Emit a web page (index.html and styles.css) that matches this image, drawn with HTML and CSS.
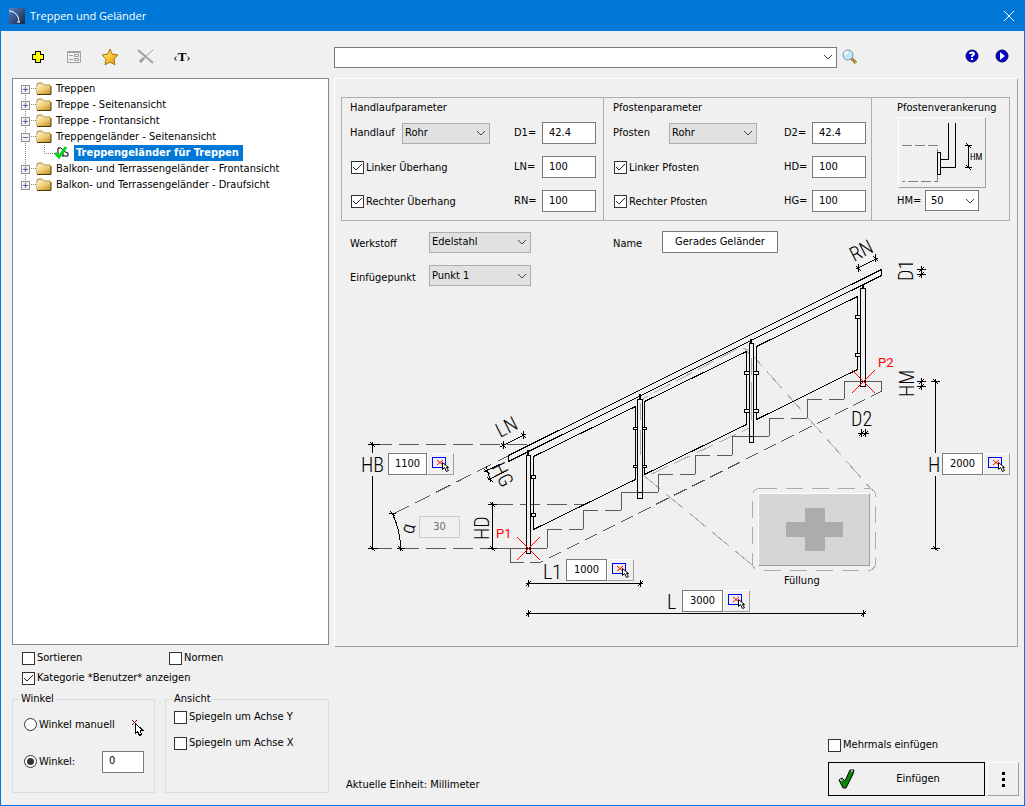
FILE: index.html
```html
<!DOCTYPE html>
<html lang="de">
<head>
    <meta charset="UTF-8">
    <meta name="viewport" content="width=device-width, initial-scale=1.0">
    <title>Treppen und Geländer</title>
    <link rel="stylesheet" href="styles.css">
</head>
<body>
    <!-- Shared icons -->
    <svg class="defs" width="0" height="0" aria-hidden="true">
        <defs>
            <linearGradient id="folderFill" x1="0" y1="0" x2="1" y2="1">
                <stop offset="0" stop-color="#fff3c0"/>
                <stop offset="0.5" stop-color="#ecc668"/>
                <stop offset="1" stop-color="#b98a24"/>
            </linearGradient>
            <linearGradient id="starFill" x1="0" y1="0" x2="1" y2="1">
                <stop offset="0" stop-color="#fff6a0"/>
                <stop offset="0.5" stop-color="#fbc832"/>
                <stop offset="1" stop-color="#e08a10"/>
            </linearGradient>
            <linearGradient id="appFill" x1="0" y1="0" x2="1" y2="1">
                <stop offset="0" stop-color="#5a7fc0"/>
                <stop offset="1" stop-color="#152548"/>
            </linearGradient>
            <symbol id="folder" viewBox="0 0 16 14">
                <path d="M1 12V2L2 1H6L8 3H14V12Z" fill="#f7e7ae" stroke="#a98a3c"/>
                <path d="M1 4H15V12H1Z" fill="url(#folderFill)"/>
                <path d="M15 4V12.500H1" fill="none" stroke="#4a3508"/>
            </symbol>
            <symbol id="pick" viewBox="0 0 20 18">
                <rect x="1.500" y="2.500" width="13" height="10" fill="none" stroke="#0000ff"/>
                <path d="M6 5L12 10M12 5L6 10" stroke="#ff0000"/>
                <path d="M11.500 7.500V14.500L13.500 12.500L15.500 16.500L17.500 15.500L15.500 12.500H17.500Z" fill="#fff" stroke="#000"/>
            </symbol>
        </defs>
    </svg>

    <header class="titlebar">
        <svg class="app-icon" width="16" height="16" viewBox="0 0 16 16">
            <rect width="16" height="16" fill="url(#appFill)"/>
            <path d="M0 3C5 3 10 7 10 14M8 14H11" fill="none" stroke="#fff"/>
        </svg>
        <h1>Treppen und Geländer</h1>
        <button class="close" type="button" aria-label="Schließen">
            <svg width="12" height="12" viewBox="0 0 12 12"><path d="M1 1L11 11M11 1L1 11" stroke="#fff" fill="none"/></svg>
        </button>
    </header>

    <main class="dialog">
        <div class="toolbar">
            <button class="tool" type="button" aria-label="Hinzufügen">
                <svg width="16" height="16" viewBox="0 0 16 16" shape-rendering="crispEdges"><path d="M5.500 2.500H10.500V5.500H13.500V10.500H10.500V13.500H5.500V10.500H2.500V5.500H5.500Z" fill="#ffff00" stroke="#000"/></svg>
            </button>
            <button class="tool" type="button" aria-label="Eigenschaften">
                <svg width="16" height="16" viewBox="0 0 16 16" fill="none" stroke="#a0a0a0">
                    <path d="M1.500 2.500H14.500V13.500H1.500ZM1 3.500H15"/>
                    <path d="M3 6.500H7M3 10.500H7M8.500 5.500H12.500V7.500H8.500ZM8.500 9.500H12.500V11.500H8.500Z"/>
                </svg>
            </button>
            <button class="tool" type="button" aria-label="Favorit">
                <svg width="16" height="16" viewBox="0 0 16 16"><path d="M8 0L10 5L16 6L12 10L13 16L8 13L3 16L4 10L0 6L6 5Z" fill="url(#starFill)" stroke="#a87414"/></svg>
            </button>
            <button class="tool" type="button" aria-label="Löschen">
                <svg width="18" height="16" viewBox="0 0 18 16" fill="none">
                    <path d="M3 2L17 15M17 2L5 14" stroke="#fff"/>
                    <path d="M1 1L16 14" stroke="#a0a0a0" stroke-width="2"/>
                    <path d="M16 1L6 10L3 14" stroke="#a0a0a0" stroke-width="1"/>
                    <path d="M7 9L3 13" stroke="#a0a0a0" stroke-width="3"/>
                </svg>
            </button>
            <button class="tool rename" type="button" aria-label="Umbenennen">&lsaquo;<b>T</b>&rsaquo;</button>
        </div>

        <div class="searchbar">
            <select class="search" aria-label="Suche"><option></option></select>
            <button class="tool" type="button" aria-label="Suchen">
                <svg width="16" height="16" viewBox="0 0 16 16">
                    <path d="M9 9L14 14" stroke="#8a6a20" stroke-width="3"/>
                    <path d="M9 9L14 14" stroke="#f0c860" stroke-width="1"/>
                    <circle cx="6" cy="6" r="5" fill="#c4e6f8" stroke="#7c96a8"/>
                    <path d="M3 6A3 3 0 0 1 6 3" stroke="#fff" stroke-width="2" fill="none"/>
                </svg>
            </button>
            <span class="spacer"></span>
            <button class="tool help" type="button" aria-label="Hilfe">
                <svg width="14" height="14" viewBox="0 0 14 14">
                    <circle cx="7" cy="7" r="6" fill="#0000c8" stroke="#000070"/>
                    <path d="M5 5C5 3 9 3 9 5C9 6 7 6 7 8M7 9V11" stroke="#fff" stroke-width="2" fill="none"/>
                </svg>
            </button>
            <button class="tool help" type="button" aria-label="Video">
                <svg width="14" height="14" viewBox="0 0 14 14">
                    <circle cx="7" cy="7" r="6" fill="#0000c8" stroke="#000070"/>
                    <path d="M5 3L10 7L5 11Z" fill="#fff"/>
                </svg>
            </button>
        </div>

        <ul class="tree">
            <li><button class="toggle" type="button" aria-label="Öffnen">+</button><a href="#"><svg class="folder"><use href="#folder"/></svg>Treppen</a></li>
            <li><button class="toggle" type="button" aria-label="Öffnen">+</button><a href="#"><svg class="folder"><use href="#folder"/></svg>Treppe - Seitenansicht</a></li>
            <li><button class="toggle" type="button" aria-label="Öffnen">+</button><a href="#"><svg class="folder"><use href="#folder"/></svg>Treppe - Frontansicht</a></li>
            <li><button class="toggle" type="button" aria-label="Schließen">−</button><a href="#"><svg class="folder"><use href="#folder"/></svg>Treppengeländer - Seitenansicht</a></li>
            <li class="child">
                <a href="#">
                    <svg width="16" height="16" viewBox="0 0 16 16">
                        <path d="M4 12V3H7L10 6M9 11V6L14 8V11H8" fill="none" stroke="#000" stroke-width="1"/>
                        <path d="M1 8L5 12L12 2" fill="none" stroke="#00d818" stroke-width="3"/>
                    </svg><span class="selected">Treppengeländer für Treppen</span>
                </a>
            </li>
            <li><button class="toggle" type="button" aria-label="Öffnen">+</button><a href="#"><svg class="folder"><use href="#folder"/></svg>Balkon- und Terrassengeländer - Frontansicht</a></li>
            <li><button class="toggle" type="button" aria-label="Öffnen">+</button><a href="#"><svg class="folder"><use href="#folder"/></svg>Balkon- und Terrassengeländer - Draufsicht</a></li>
        </ul>

        <section class="panel">
            <div class="params">
                <div class="group rail">
                    <h2>Handlaufparameter</h2>
                    <label for="handlauf">Handlauf</label>
                    <select id="handlauf"><option>Rohr</option></select>
                    <label class="value" for="d1">D1=</label>
                    <input type="text" id="d1" value="42.4">
                    <label class="check"><input type="checkbox" checked>Linker Überhang</label>
                    <label class="value" for="ln">LN=</label>
                    <input type="text" id="ln" value="100">
                    <label class="check"><input type="checkbox" checked>Rechter Überhang</label>
                    <label class="value" for="rn">RN=</label>
                    <input type="text" id="rn" value="100">
                </div>
                <div class="group post">
                    <h2>Pfostenparameter</h2>
                    <label for="pfosten">Pfosten</label>
                    <select id="pfosten"><option>Rohr</option></select>
                    <label class="value" for="d2">D2=</label>
                    <input type="text" id="d2" value="42.4">
                    <label class="check"><input type="checkbox" checked>Linker Pfosten</label>
                    <label class="value" for="hd">HD=</label>
                    <input type="text" id="hd" value="100">
                    <label class="check"><input type="checkbox" checked>Rechter Pfosten</label>
                    <label class="value" for="hg">HG=</label>
                    <input type="text" id="hg" value="100">
                </div>
                <div class="anchor">
                    <h2>Pfostenverankerung</h2>
                    <button class="anchor-pic" type="button" aria-label="Pfostenverankerung wählen">
                        <svg width="86" height="69" viewBox="0 0 86 69" shape-rendering="crispEdges" fill="none" stroke="#000">
                            <path d="M3 27.500H38.500V63.500H3" stroke="#808080" stroke-dasharray="10 3"/>
                            <path d="M38.500 34.500H41.500V56.500H38.500ZM41 41.500H49.500V5M41 49.500H56.500V5"/>
                            <path d="M69.500 27V50M66 27.500H73M66 49.500H73M67 25L72 30M67 47L72 52"/>
                            <text class="cad small" x="71" y="42">HM</text>
                        </svg>
                    </button>
                    <div class="anchor-row">
                        <label for="hm">HM=</label>
                        <select id="hm" class="white"><option>50</option></select>
                    </div>
                </div>
            </div>

            <div class="canvas">
                <svg class="drawing" width="682" height="424" viewBox="335 222 682 424" fill="none" stroke="#000">
                    <g shape-rendering="crispEdges">
                        <!-- detail frame of the filling -->
                        <g stroke="#acacac">
                            <path d="M641.500 486V404L644 398L735 350L745 348L751.500 358V427L645 477" stroke-dasharray="18 7"/>
                            <path d="M747 349L872 490M643 475L757 569" stroke-dasharray="22 8"/>
                            <rect x="752.500" y="488.500" width="123" height="82" rx="7" stroke-dasharray="17 9"/>
                        </g>

                        <!-- stairs and construction lines -->
                        <g stroke="#5a5a5a">
                            <path d="M372 444.500H529" stroke-dasharray="20 7"/>
                            <path d="M372 548.500H500" stroke-dasharray="20 7"/>
                            <path d="M495 548.500H547"/>
                            <path d="M493 504.500H586" stroke-dasharray="20 7"/>
                            <path d="M395 513L508 456" stroke-dasharray="16 7"/>
                            <path d="M547.500 548V529.500M583.500 529V510.500M621.500 510V492.500M658.500 492V474.500M695.500 474V455.500M732.500 455V436.500M769.500 436V418.500M807.500 418V399.500M844.500 399V381.500H881.500V391M510.500 548V562.500"/>
                            <path d="M547 529.500H583M583 510.500H621M658 474.500H695M695 455.500H732M769 418.500H807M807 399.500H844" stroke-dasharray="15 7 16 100"/>
                            <path d="M621 492.500H658M732 436.500H769"/>
                            <path d="M510 562.500H540L882 391" stroke-dasharray="14 6"/>
                        </g>

                        <!-- handrail -->
                        <path d="M508.500 460.500V455.500L881.500 269.500V275.500L508.500 461.500"/>

                        <!-- panels -->
                        <path d="M533.500 456.500L635.500 406.500V479.500L533.500 529.500Z"/>
                        <path d="M644.500 401.500L746.500 351.500V424.500L644.500 474.500Z"/>
                        <path d="M756.500 346.500L857.500 296.500V369.500L756.500 419.500Z"/>

                        <!-- posts -->
                        <path d="M528 450V455M640 394V399M751 339V343M863 284V288" stroke-width="2"/>
                        <g fill="#f0f0f0">
                            <path d="M526.500 455.500H530.500V553.500H526.500ZM526.500 548.500H530.500"/>
                            <path d="M637.500 399.500H642.500V498.500H637.500ZM637.500 492.500H642.500"/>
                            <path d="M749.500 343.500H753.500V442.500H749.500ZM749.500 436.500H753.500"/>
                            <path d="M860.500 288.500H865.500V386.500H860.500ZM860.500 381.500H865.500"/>
                            <path d="M531.500 475.500H535.500V478.500H531.500ZM531.500 513.500H535.500V516.500H531.500Z"/>
                            <path d="M633.500 427.500H637.500V429.500H633.500ZM633.500 465.500H637.500V467.500H633.500ZM642.500 427.500H646.500V429.500H642.500ZM642.500 465.500H646.500V467.500H642.500Z"/>
                            <path d="M744.500 371.500H749.500V374.500H744.500ZM744.500 409.500H749.500V412.500H744.500ZM753.500 371.500H758.500V374.500H753.500ZM753.500 409.500H758.500V412.500H753.500Z"/>
                            <path d="M855.500 315.500H860.500V318.500H855.500ZM855.500 353.500H860.500V356.500H855.500Z"/>
                        </g>
                        <path d="M640.500 403V420M640.500 430V455M751.500 358V375M751.500 382V420" stroke="#acacac"/>

                        <!-- dimension lines -->
                        <path d="M372.500 442V453M372.500 476V550M368 444.500H380M368 548.500H378M370 442L375 447M370 546L375 551"/>
                        <path d="M935.500 379V453M935.500 476V550M931 381.500H940M931 548.500H940M933 379L938 384M933 546L938 551"/>
                        <path d="M492.500 502V550M488 504.500H497M488 548.500H497M490 502L495 507M490 546L495 551"/>
                        <path d="M526 583.500H643M528.500 580V587M640.500 580V587M526 586L531 581M638 586L643 581"/>
                        <path d="M526 613.500H866M528.500 610V617M863.500 610V617M526 616L531 611M861 616L866 611"/>
                        <path d="M392 513Q400 528 401 551M389 513.500H396M390 511L395 516M397 548.500H405M398 546L403 551"/>
                        <path d="M500 447L526 434M503.500 441V449M523.500 431V439M501 443L506 448M521 433L526 438"/>
                        <path d="M856 269L878 258M858.500 264V272M875.500 254V262M856 266L861 271M873 256L878 261"/>
                        <path d="M484 472L500 464M488 480L506 471M486 466L491 482M484 469L490 474M487 477L493 482"/>
                        <path d="M917 269.500H926M917 274.500H926M921.500 266V278M919 272L924 267M919 277L924 272"/>
                        <path d="M917 381.500H926M917 386.500H926M921.500 378V390M919 384L924 379M919 389L924 384"/>
                        <path d="M858 433.500H869M861.500 429V437M865.500 429V437M859 436L864 431M863 436L868 431"/>
                    </g>

                    <!-- insertion points -->
                    <path class="point" d="M517 537L540 560M540 537L517 560M852 370L875 393M875 370L852 393"/>

                    <text class="cad" x="361" y="472">HB</text>
                    <text class="cad" x="928" y="472">H</text>
                    <text class="cad" x="543" y="579">L1</text>
                    <text class="cad" x="667" y="609">L</text>
                    <text class="cad" x="851" y="426">D2</text>
                    <text class="cad" transform="translate(489 540) rotate(-90)">HD</text>
                    <text class="cad" transform="translate(913 281) rotate(-90)">D1</text>
                    <text class="cad" transform="translate(914 397) rotate(-90)">HM</text>
                    <text class="cad" transform="translate(500 438) rotate(-27)">LN</text>
                    <text class="cad" transform="translate(854 262) rotate(-27)">RN</text>
                    <text class="cad" transform="translate(491 467) rotate(63)">HG</text>
                    <text class="cad" transform="translate(413 535) rotate(-75)">α</text>
                    <text class="cad red" x="496" y="538">P1</text>
                    <text class="cad red" x="878" y="367">P2</text>
                </svg>

                <div class="fields">
                    <label for="werkstoff">Werkstoff</label>
                    <select id="werkstoff"><option>Edelstahl</option></select>
                    <label class="name" for="name">Name</label>
                    <input type="text" id="name" value="Gerades Geländer">
                    <label for="punkt">Einfügepunkt</label>
                    <select id="punkt"><option>Punkt 1</option></select>
                </div>

                <div class="dim dim-hb">
                    <input type="text" value="1100" aria-label="HB">
                    <button type="button" aria-label="HB wählen"><svg class="pick"><use href="#pick"/></svg></button>
                </div>
                <div class="dim dim-angle">
                    <input type="text" value="30" aria-label="Winkel" disabled>
                </div>
                <div class="dim dim-h">
                    <input type="text" value="2000" aria-label="H">
                    <button type="button" aria-label="H wählen"><svg class="pick"><use href="#pick"/></svg></button>
                </div>
                <div class="dim dim-l1">
                    <input type="text" value="1000" aria-label="L1">
                    <button type="button" aria-label="L1 wählen"><svg class="pick"><use href="#pick"/></svg></button>
                </div>
                <div class="dim dim-l">
                    <input type="text" value="3000" aria-label="L">
                    <button type="button" aria-label="L wählen"><svg class="pick"><use href="#pick"/></svg></button>
                </div>

                <div class="filling">
                    <button type="button" id="filling" aria-labelledby="filling-label">
                        <svg width="57" height="43" viewBox="0 0 57 43"><path d="M19 0H39V14H57V29H39V43H19V29H0V14H19Z" fill="#acacac"/></svg>
                    </button>
                    <span id="filling-label">Füllung</span>
                </div>
            </div>
        </section>

        <div class="options">
            <div class="checks">
                <label class="check"><input type="checkbox">Sortieren</label>
                <label class="check"><input type="checkbox">Normen</label>
                <label class="check wide"><input type="checkbox" checked>Kategorie *Benutzer* anzeigen</label>
            </div>
            <div class="boxes">
                <fieldset class="angle">
                    <legend>Winkel</legend>
                    <label class="check"><input type="radio" name="winkel">Winkel manuell</label>
                    <svg class="cursor" width="12" height="18" viewBox="0 0 12 18" shape-rendering="crispEdges">
                        <path d="M0 1L5 6M5 1L0 6" stroke="#800000"/>
                        <path d="M3.500 4.500V14.500L5.500 12.500L7.500 16.500L9.500 15.500L8.500 11.500H11Z" fill="#fff" stroke="#000"/>
                    </svg>
                    <label class="check"><input type="radio" name="winkel" checked>Winkel:</label>
                    <input type="text" value="0" aria-label="Winkel">
                </fieldset>
                <fieldset class="view">
                    <legend>Ansicht</legend>
                    <label class="check"><input type="checkbox">Spiegeln um Achse Y</label>
                    <label class="check"><input type="checkbox">Spiegeln um Achse X</label>
                </fieldset>
            </div>
        </div>

        <footer class="actions">
            <p>Aktuelle Einheit: Millimeter</p>
            <div class="insert">
                <label class="check"><input type="checkbox">Mehrmals einfügen</label>
                <div class="buttons">
                    <button class="ok" type="button">
                        <svg width="18" height="22" viewBox="0 0 18 22">
                            <path d="M1 12L4 10L7 13L12 2H16L15 6L8 20H5Z" fill="#0a8a0a" stroke="#000"/>
                            <path d="M2 12L5 12M13 3L15 3" stroke="#a8a8a8" stroke-width="2"/>
                        </svg>
                        <span>Einfügen</span>
                    </button>
                    <button class="more" type="button" aria-label="Mehr">
                        <svg width="3" height="15" viewBox="0 0 3 15"><path d="M0 0H3V3H0ZM0 6H3V9H0ZM0 12H3V15H0Z" fill="#000"/></svg>
                    </button>
                </div>
            </div>
        </footer>
    </main>
</body>
</html>
```

FILE: styles.css
```css
* {
    box-sizing: border-box;
}
body {
    margin: 0;
    min-height: 100vh;
    display: flex;
    flex-direction: column;
    border: 1px solid #0078d7;
    background: #f0f0f0;
    color: #000;
    font: 11px/14px "DejaVu Sans Condensed", "DejaVu Sans", sans-serif;
}
h1, h2, p {
    margin: 0;
    font-size: 11px;
    font-weight: normal;
}
button, input, select {
    font: inherit;
    color: inherit;
    margin: 0;
}
.defs {
    position: absolute;
}

/* Title bar */
.titlebar {
    display: flex;
    align-items: center;
    gap: 5px;
    height: 30px;
    padding: 0 9px 0 8px;
    background: #0078d7;
    color: #fff;
}
.titlebar h1 {
    flex: 1;
    font: 11px/16px "Open Sans", "Noto Sans", sans-serif;
}
.close {
    display: flex;
    padding: 0;
    border: 0;
    background: none;
}

.dialog {
    flex: 1;
    display: grid;
    grid-template-columns: 317px 1fr;
    grid-template-rows: 47px 1fr auto;
    column-gap: 5px;
    padding: 0 5px 0 11px;
}

/* Toolbars */
.toolbar {
    display: flex;
    align-items: center;
    gap: 18px;
    padding: 5px 0 0 17px;
}
.tool {
    display: flex;
    align-items: center;
    justify-content: center;
    width: 18px;
    height: 18px;
    padding: 0;
    border: 0;
    background: none;
}
.rename {
    font: 13px/18px "Liberation Serif", serif;
}
.searchbar {
    display: flex;
    align-items: center;
    gap: 4px;
    padding: 5px 8px 0 0;
}
.searchbar .search {
    width: 503px;
}
.spacer {
    flex: 1;
}
.help {
    padding-bottom: 2px;
}
.help + .help {
    margin-left: 8px;
}

/* Form controls */
input[type="text"] {
    height: 22px;
    width: 100%;
    min-width: 0;
    padding: 0 6px 2px;
    border: 1px solid #7a7a7a;
    background: #fff;
}
select {
    appearance: none;
    height: 21px;
    width: 100%;
    padding: 0 20px 0 2px;
    border: 1px solid #adadad;
    border-radius: 0;
    background: #e1e1e1 url("data:image/svg+xml,%3Csvg xmlns='http://www.w3.org/2000/svg' width='10' height='6'%3E%3Cpath d='M1 1L5 5L9 1' fill='none' stroke='%23444'/%3E%3C/svg%3E") no-repeat right 3px center;
}
select.white, select.search {
    border-color: #7a7a7a;
    background-color: #fff;
}
select.white {
    padding-left: 5px;
}
.check {
    display: flex;
    align-items: center;
    gap: 2px;
    white-space: nowrap;
}
input[type="checkbox"], input[type="radio"] {
    appearance: none;
    flex: none;
    display: grid;
    place-items: center;
    width: 13px;
    height: 13px;
    border: 1px solid #333;
    background: #fff;
}
input[type="radio"] {
    border-radius: 50%;
}
input[type="checkbox"]:checked {
    background: #fff url("data:image/svg+xml,%3Csvg xmlns='http://www.w3.org/2000/svg' width='11' height='11'%3E%3Cpath d='M1 5L4 8L10 2' fill='none' stroke='%23222'/%3E%3C/svg%3E") center no-repeat;
}
input[type="radio"]:checked::before {
    content: "";
    width: 7px;
    height: 7px;
    border-radius: 50%;
    background: #333;
}

/* Tree */
.tree {
    margin: 0 0 2px;
    padding: 2px 0 0 8px;
    list-style: none;
    border: 1px solid #828790;
    background: #fff;
}
.tree li {
    display: flex;
    align-items: center;
    height: 16px;
    background:
        repeating-linear-gradient(#888 0 1px, #fff 1px 2px) 4px 0 / 1px 16px no-repeat,
        repeating-linear-gradient(90deg, #888 0 1px, #fff 1px 2px) 4px 7px / 12px 1px no-repeat;
}
.tree li:first-child {
    background-position: 4px 8px, 4px 7px;
}
.tree li:last-child {
    background-size: 1px 8px, 12px 1px;
}
.tree .child {
    padding-left: 33px;
    background:
        repeating-linear-gradient(#888 0 1px, #fff 1px 2px) 4px 0 / 1px 16px no-repeat,
        repeating-linear-gradient(#888 0 1px, #fff 1px 2px) 23px 0 / 1px 8px no-repeat,
        repeating-linear-gradient(90deg, #888 0 1px, #fff 1px 2px) 23px 8px / 11px 1px no-repeat;
}
.tree a {
    display: flex;
    align-items: center;
    color: #000;
    text-decoration: none;
    white-space: nowrap;
}
.toggle {
    width: 9px;
    height: 9px;
    margin-right: 6px;
    padding: 0;
    border: 1px solid #919191;
    background: #f4f4f4;
    color: #2343a0;
    font-size: 9px;
    line-height: 7px;
}
.folder {
    width: 16px;
    height: 14px;
    margin-right: 4px;
}
.child svg {
    margin-right: 4px;
}
.selected {
    height: 16px;
    padding: 0 4px 0 2px;
    background: #0078d7;
    color: #fff;
    font-weight: bold;
    line-height: 16px;
}

/* Right panel */
.panel {
    margin-right: 1px;
    border: 1px solid #fff;
    border-right-color: #a0a0a0;
    border-bottom-color: #a0a0a0;
}
.params {
    display: grid;
    grid-template-columns: 262px 268px 1fr;
    margin: 18px 7px 0 6px;
    border: 1px solid #adadad;
}
.params h2 {
    height: 21px;
    line-height: 14px;
}
.group {
    display: grid;
    align-items: center;
    row-gap: 12px;
    padding: 3px 6px 8px 8px;
    border-right: 1px solid #adadad;
}
.rail {
    grid-template-columns: 52px 88px 52px 54px;
}
.post {
    grid-template-columns: 56px 88px 55px 54px;
    padding-left: 9px;
}
.group h2 {
    grid-column: 1 / -1;
    margin-bottom: -12px;
}
.group .check {
    grid-column: span 2;
    padding: 1px 0 0 1px;
}
.group .value {
    padding-left: 24px;
}
.post .value {
    padding-left: 27px;
}
.anchor {
    padding: 3px 0 0 25px;
}
.anchor h2 {
    height: 16px;
}
.anchor-pic {
    display: flex;
    margin-left: 1px;
    padding: 0;
    border: 1px solid #fff;
    border-right-color: #a0a0a0;
    border-bottom-color: #a0a0a0;
    background: none;
}
.anchor-row {
    display: grid;
    grid-template-columns: 28px 54px;
    align-items: center;
    margin-top: 2px;
}

/* Drawing */
.canvas {
    position: relative;
    min-height: 424px;
    margin-top: 1px;
}
.drawing {
    position: absolute;
    left: 0;
    top: 0;
}
.cad {
    font: 300 20px "Roboto Condensed", "Liberation Sans Narrow", Roboto, sans-serif;
    fill: #000;
    stroke: none;
}
.cad.small {
    font-size: 9px;
    font-weight: 400;
}
.cad.red {
    font: 13px Roboto, sans-serif;
    fill: #f00;
}
.point {
    stroke: #f00;
}
.fields {
    position: relative;
    display: grid;
    grid-template-columns: 79px 102px 131px 116px;
    align-items: center;
    gap: 12px 0;
    padding: 9px 0 0 15px;
}
.fields label {
    padding-top: 4px;
}
.fields .name {
    padding-left: 82px;
}
.fields input {
    text-align: center;
}
.dim {
    position: absolute;
    display: flex;
}
.dim input[type="text"] {
    width: 41px;
    padding: 0 0 2px;
    text-align: center;
}
.dim input:disabled {
    border-color: #ccc;
    background: #f0f0f0;
    color: #6d6d6d;
}
.dim button {
    width: 27px;
    padding: 0 0 0 3px;
    border: 1px solid #fff;
    border-right-color: #a0a0a0;
    border-bottom-color: #a0a0a0;
    background: #f0f0f0;
}
.pick {
    display: block;
    width: 20px;
    height: 18px;
}
.dim-hb {
    left: 53px;
    top: 231px;
}
.dim-hb input[type="text"] {
    width: 39px;
}
.dim-angle {
    left: 84px;
    top: 294px;
}
.dim-h {
    left: 607px;
    top: 231px;
}
.dim-l1 {
    left: 231px;
    top: 337px;
}
.dim-l {
    left: 347px;
    top: 368px;
}
.filling {
    position: absolute;
    left: 423px;
    top: 271px;
}
.filling button {
    display: flex;
    align-items: center;
    justify-content: center;
    width: 112px;
    height: 73px;
    margin-bottom: 8px;
    padding: 0;
    border: 1px solid #fff;
    border-right-color: #a0a0a0;
    border-bottom-color: #a0a0a0;
    background: #d6d6d6;
}
.filling span {
    padding-left: 26px;
}

/* Options below the tree */
.checks {
    display: grid;
    grid-template-columns: 147px 1fr;
    row-gap: 6px;
    padding: 4px 0 0 10px;
}
.wide {
    grid-column: span 2;
}
.boxes {
    display: grid;
    grid-template-columns: 143px 164px;
    gap: 10px;
    padding: 7px 0 12px;
}
fieldset {
    min-width: 0;
    height: 101px;
    margin: 0;
    padding: 0 8px;
    border: 1px solid #dcdcdc;
}
legend {
    margin-left: -2px;
    padding: 0 2px;
}
.angle {
    display: grid;
    grid-template-columns: minmax(0, 1fr) 42px;
    grid-template-rows: 37px 37px;
    align-items: center;
    padding-left: 11px;
    padding-right: 10px;
}
.cursor {
    justify-self: end;
    align-self: end;
    margin-bottom: 6px;
}
.angle legend {
    margin-left: -5px;
}
.view .check {
    height: 22px;
    margin-bottom: 4px;
}

/* Bottom right */
.actions {
    display: flex;
    justify-content: space-between;
    align-items: flex-end;
    padding-bottom: 9px;
}
.actions p {
    padding: 0 0 4px 12px;
}
.insert .check {
    margin-bottom: 10px;
}
.buttons {
    display: flex;
    gap: 2px;
}
.ok {
    display: flex;
    align-items: center;
    width: 157px;
    height: 34px;
    padding: 0 4px 0 9px;
    border: 1px solid #000;
    background: #f0f0f0;
}
.ok span {
    flex: 1;
    text-align: center;
}
.more {
    display: flex;
    align-items: center;
    justify-content: center;
    width: 32px;
    height: 34px;
    padding: 0;
    border: 1px solid #fff;
    border-right-color: #a0a0a0;
    border-bottom-color: #a0a0a0;
    background: #f0f0f0;
}
```
